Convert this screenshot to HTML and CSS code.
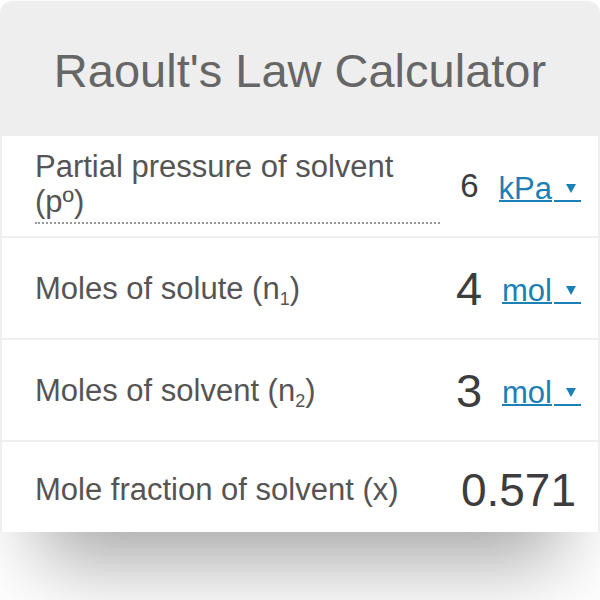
FILE: index.html
```html
<!DOCTYPE html>
<html lang="en">
<head>
<meta charset="utf-8">
<title>Raoult's Law Calculator</title>
<link rel="stylesheet" href="styles.css">
</head>
<body>
<div class="calc">
  <header class="calc-head">
    <h1 class="calc-title">Raoult's Law Calculator</h1>
  </header>

  <div class="row">
    <div class="label label-tip">Partial pressure of solvent (pº)</div>
    <div class="value value-sm">6</div>
    <div class="unit"><a class="unit-name" href="#">kPa</a><span class="caret"><span class="caret-tri"></span></span></div>
  </div>

  <div class="row">
    <div class="label">Moles of solute (n<sub class="sub">1</sub>)</div>
    <div class="value">4</div>
    <div class="unit"><a class="unit-name" href="#">mol</a><span class="caret"><span class="caret-tri"></span></span></div>
  </div>

  <div class="row">
    <div class="label">Moles of solvent (n<sub class="sub">2</sub>)</div>
    <div class="value">3</div>
    <div class="unit"><a class="unit-name" href="#">mol</a><span class="caret"><span class="caret-tri"></span></span></div>
  </div>

  <div class="row row-last">
    <div class="label">Mole fraction of solvent (x)</div>
    <div class="value value-result">0.571</div>
  </div>
</div>
</body>
</html>
```

FILE: styles.css
```css
html, body {
  margin: 0;
  padding: 0;
  background: #ffffff;
}

body {
  font-family: "Liberation Sans", Arial, sans-serif;
  width: 600px;
  height: 600px;
  overflow: hidden;
}

.calc {
  width: 600px;
  background: #eeeeee;
  border-radius: 13px 13px 0 0;
  box-shadow: inset 0 1px 0 rgba(255, 255, 255, 0.8),
              0 69px 76px -40px rgba(0, 0, 0, 0.36);
  padding: 0 2px;
  box-sizing: border-box;
  display: flex;
  flex-direction: column;
  gap: 2px;
}

.calc-head {
  height: 136px;
  margin-bottom: -2px;
  display: flex;
  align-items: center;
  justify-content: center;
  padding-top: 6px;
  box-sizing: border-box;
}

.calc-title {
  margin: 0;
  font-weight: normal;
  font-size: 47px;
  color: #666666;
  line-height: 1.15;
}

.row {
  height: 100px;
  background: #ffffff;
  display: flex;
  align-items: center;
  padding: 0 17px 0 33px;
  box-sizing: border-box;
}

.row-last {
  height: 90px;
  padding-top: 4px;
}

.label {
  flex: 1;
  margin-right: 20px;
  font-size: 31px;
  line-height: 35px;
  color: #555555;
}

.label-tip {
  border-bottom: 2px dotted #9a9a9a;
  padding-bottom: 3px;
}

.sub {
  font-size: 18px;
  vertical-align: -6px;
  line-height: 0;
}

.value {
  font-size: 47px;
  color: #3d3d3d;
  margin-top: 3px;
  line-height: 1.15;
}

.value-sm {
  font-size: 33px;
  margin-top: 0;
}

.value-result {
  font-size: 46px;
  margin-right: 5px;
}

.unit {
  margin-left: 20px;
  display: flex;
  align-items: flex-end;
}

.unit-name {
  display: block;
  font-size: 31px;
  line-height: 23px;
  color: #1a80b6;
  text-decoration: none;
  border-bottom: 2px solid #1a80b6;
}

.caret {
  width: 22px;
  margin-left: 2px;
  height: 23px;
  border-bottom: 2px solid #1a80b6;
  display: flex;
  justify-content: flex-end;
  align-items: flex-end;
  padding: 0 5px 7px 0;
  box-sizing: content-box;
}

.caret-tri {
  width: 0;
  height: 0;
  border-left: 5.5px solid transparent;
  border-right: 5.5px solid transparent;
  border-top: 9px solid #1a80b6;
}
```
